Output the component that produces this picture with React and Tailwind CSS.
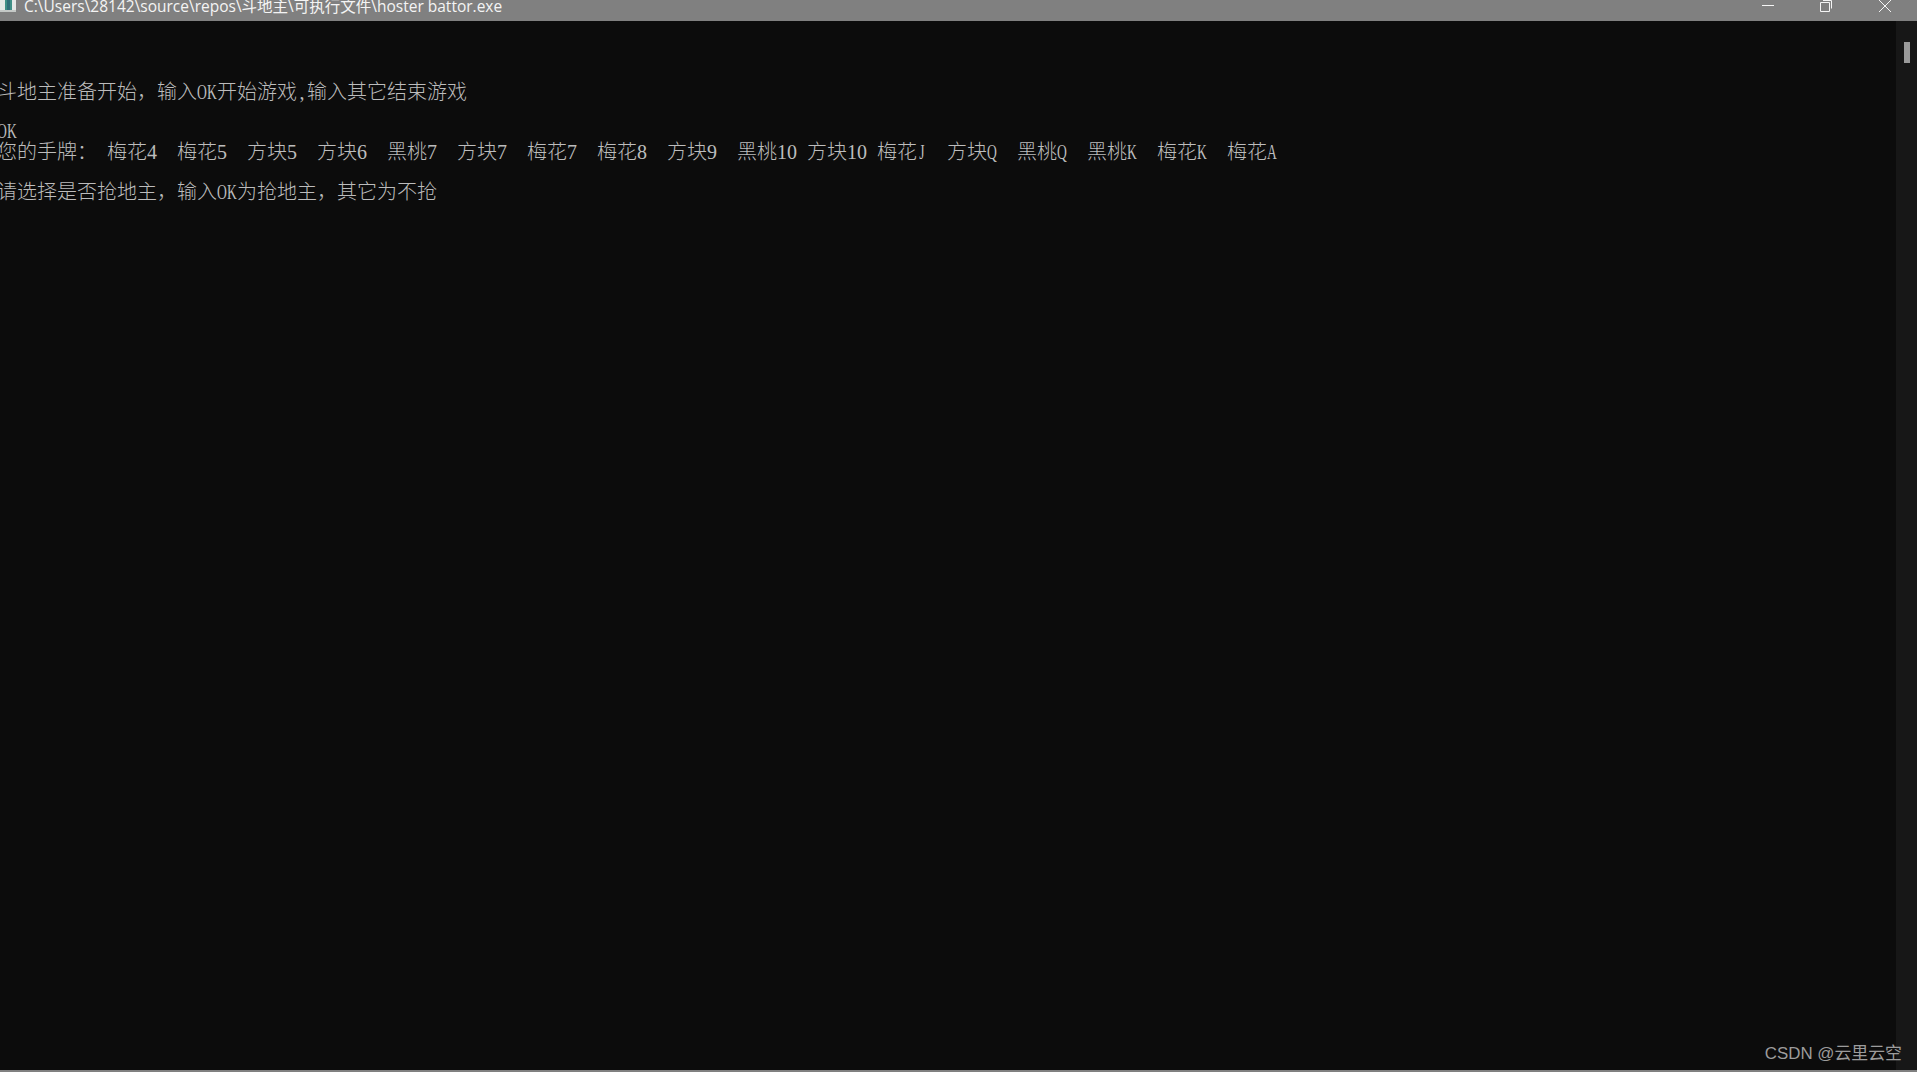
function Txt({ children }) {
  const parts = children.split(/([\x00-\x7f]+)/).filter(Boolean);
  return parts.map((p, i) =>
    /^[\x00-\x7f]/.test(p) ? (
      <LatinRun key={i} text={p} />
    ) : (
      <span key={i} className="text-[20px] font-light font-['Noto_Sans_CJK_SC',sans-serif]">{p}</span>
    )
  );
}

function LatinRun({ text }) {
  return [...text].map((c, i) =>
    /[A-Z]/.test(c) ? (
      <span key={i} className="inline-block w-[10px] text-center text-[20px] scale-x-[0.68] font-['Liberation_Serif',serif]">
        <span className="-mx-1 inline-block">{c}</span>
      </span>
    ) : (
      <span key={i} className="inline-block w-[10px] text-center text-[20px] font-['Liberation_Serif',serif]">{c}</span>
    )
  );
}

function Line({ text = "" }) {
  return (
    <div className="h-5 leading-5 whitespace-pre -ml-[3px] text-[#bcbcbc]">
      <Txt>{text}</Txt>
    </div>
  );
}

export default function App() {
  return (
    <div className="relative flex h-[1072px] w-[1917px] flex-col overflow-hidden bg-[#0c0c0c]">
      <div className="flex h-[21px] shrink-0 items-start overflow-hidden bg-[#808080] text-white">
        <svg width="18" height="14" viewBox="0 0 18 14" className="shrink-0">
          <rect x="0" y="0" width="16" height="12" fill="#e4e8e6" />
          <rect x="5" y="0" width="7" height="10" fill="#3f8f86" />
          <rect x="7" y="0" width="3" height="10" fill="#2f6f78" />
          <rect x="0" y="10" width="16" height="2" fill="#c4c8c6" />
        </svg>
        <span className="ml-[6px] -mt-[5px] whitespace-pre text-[15.5px] leading-[22px] text-[#f4f4f4] font-['Open_Sans','Noto_Sans_CJK_SC',sans-serif]">
          {"C:\\Users\\28142\\source\\repos\\斗地主\\可执行文件\\hoster battor.exe"}
        </span>
        <div className="ml-auto flex shrink-0 items-start pr-[26px]">
          <svg width="12" height="12" viewBox="0 0 12 12" className="mr-[46px]" fill="none" stroke="#f5f5f5" strokeWidth="1">
            <path d="M0 5.5H12" />
          </svg>
          <svg width="12" height="12" viewBox="0 0 12 12" className="mr-[47px]" fill="none" stroke="#f5f5f5" strokeWidth="1">
            <path d="M0.5 2.5H9.5V11.5H0.5Z" />
            <path d="M3 0.5H11.5V8.5" />
          </svg>
          <svg width="12" height="12" viewBox="0 0 12 12" fill="none" stroke="#f5f5f5" strokeWidth="1">
            <path d="M0 0L12 12M12 0L0 12" />
          </svg>
        </div>
      </div>

      <div className="flex min-h-0 flex-1">
        <div className="min-w-0 flex-1 overflow-hidden bg-[#0c0c0c] pt-[60px]">
          <Line text="斗地主准备开始，输入OK开始游戏,输入其它结束游戏" />
          <Line />
          <Line text="OK" />
          <Line text="您的手牌： 梅花4  梅花5  方块5  方块6  黑桃7  方块7  梅花7  梅花8  方块9  黑桃10 方块10 梅花J  方块Q  黑桃Q  黑桃K  梅花K  梅花A" />
          <Line />
          <Line text="请选择是否抢地主，输入OK为抢地主，其它为不抢" />
        </div>
        <div className="w-[21px] shrink-0 bg-[#171717] pl-[8px] pt-[21px]">
          <div className="h-[21px] w-[6px] bg-[#9a9a9a]" />
        </div>
      </div>

      <div className="h-[2px] shrink-0 bg-[#808080]" />

      <div className="absolute bottom-[6px] right-[15px] text-[16.9px] leading-6 text-[#9c9c9c] font-['Liberation_Sans','Noto_Sans_CJK_SC',sans-serif]">
        CSDN @云里云空
      </div>
    </div>
  );
}
